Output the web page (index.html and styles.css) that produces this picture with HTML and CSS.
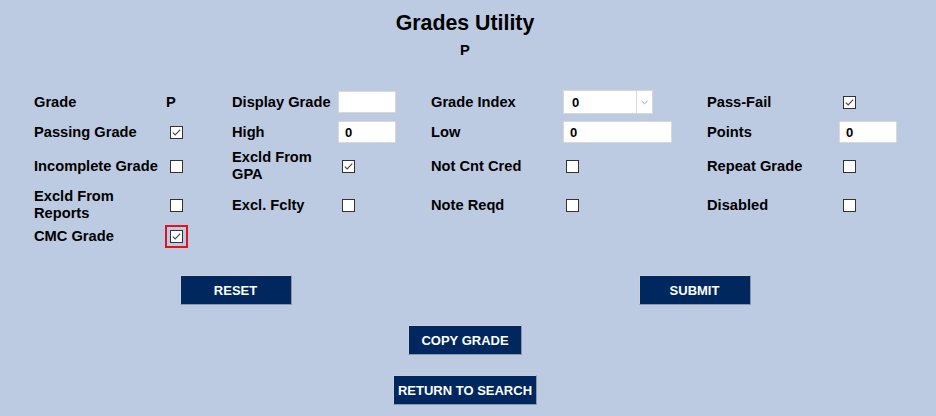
FILE: index.html
```html
<!DOCTYPE html>
<html>
<head>
<meta charset="utf-8">
<link rel="stylesheet" href="styles.css">
</head>
<body>
<div class="page">
  <h1 class="title">Grades Utility</h1>
  <div class="subtitle">P</div>

  <div class="form-grid">
    <!-- row 1 -->
    <div class="lbl">Grade</div>
    <div class="val"><span class="static">P</span></div>
    <div class="lbl">Display Grade</div>
    <div class="val"><input class="txt txt-sm" type="text" value=""></div>
    <div class="lbl">Grade Index</div>
    <div class="val">
      <div class="sel"><span class="sel-text">0</span><span class="sel-btn"><svg width="7" height="5" viewBox="0 0 7 5"><path d="M0.5 1 L3.5 3.8 L6.5 1" fill="none" stroke="#a0a0a0" stroke-width="1"/></svg></span></div>
    </div>
    <div class="lbl">Pass-Fail</div>
    <div class="val"><span class="cb checked"><svg width="13" height="13" viewBox="0 0 13 13"><path d="M2.8 6.6 L5.2 8.9 L10.2 3.6" fill="none" stroke="#4a4a4a" stroke-width="1.2"/></svg></span></div>

    <!-- row 2 -->
    <div class="lbl">Passing Grade</div>
    <div class="val"><span class="cb checked"><svg width="13" height="13" viewBox="0 0 13 13"><path d="M2.8 6.6 L5.2 8.9 L10.2 3.6" fill="none" stroke="#4a4a4a" stroke-width="1.2"/></svg></span></div>
    <div class="lbl">High</div>
    <div class="val"><input class="txt txt-sm" type="text" value="0"></div>
    <div class="lbl">Low</div>
    <div class="val"><input class="txt txt-lg" type="text" value="0"></div>
    <div class="lbl">Points</div>
    <div class="val"><input class="txt txt-sm" type="text" value="0"></div>

    <!-- row 3 -->
    <div class="lbl">Incomplete Grade</div>
    <div class="val"><span class="cb"></span></div>
    <div class="lbl">Excld From<br>GPA</div>
    <div class="val"><span class="cb checked"><svg width="13" height="13" viewBox="0 0 13 13"><path d="M2.8 6.6 L5.2 8.9 L10.2 3.6" fill="none" stroke="#4a4a4a" stroke-width="1.2"/></svg></span></div>
    <div class="lbl">Not Cnt Cred</div>
    <div class="val"><span class="cb cb-c3"></span></div>
    <div class="lbl">Repeat Grade</div>
    <div class="val"><span class="cb"></span></div>

    <!-- row 4 -->
    <div class="lbl">Excld From<br>Reports</div>
    <div class="val"><span class="cb"></span></div>
    <div class="lbl">Excl. Fclty</div>
    <div class="val"><span class="cb"></span></div>
    <div class="lbl">Note Reqd</div>
    <div class="val"><span class="cb cb-c3"></span></div>
    <div class="lbl">Disabled</div>
    <div class="val"><span class="cb"></span></div>

    <!-- row 5 -->
    <div class="lbl">CMC Grade</div>
    <div class="val"><span class="cb checked focus"><svg width="13" height="13" viewBox="0 0 13 13"><path d="M2.8 6.6 L5.2 8.9 L10.2 3.6" fill="none" stroke="#4a4a4a" stroke-width="1.2"/></svg></span></div>
  </div>

  <div class="actions">
    <div class="half"><button class="btn btn-fixed">RESET</button></div>
    <div class="half"><button class="btn btn-fixed">SUBMIT</button></div>
  </div>
  <div class="center-row"><button class="btn btn-copy">COPY GRADE</button></div>
  <div class="center-row"><button class="btn btn-return">RETURN TO SEARCH</button></div>
</div>
</body>
</html>
```

FILE: styles.css
```css
html, body {
  margin: 0;
  padding: 0;
  background: #bccbe2;
}
body {
  font-family: "Liberation Sans", Arial, sans-serif;
  color: #000;
  width: 936px;
  height: 416px;
  overflow: hidden;
}
.page {
  padding: 0 12px 0 6px;
}
.title {
  margin: 0;
  padding-top: 11px;
  font-size: 21.33px;
  line-height: 24px;
  font-weight: bold;
  text-align: center;
}
.subtitle {
  margin-top: 7px;
  font-size: 14.67px;
  line-height: 17px;
  font-weight: bold;
  text-align: center;
}
.form-grid {
  margin: 28px 0 0 28px;
  display: grid;
  grid-template-columns: 132px 66px 106px 93px 132px 144px 132px 80px;
  grid-template-rows: 30px 30px 38px 40px 22px;
  align-items: center;
}
.lbl {
  font-size: 14.67px;
  font-weight: bold;
  line-height: 17px;
}
.val {
  display: flex;
  align-items: center;
  font-size: 14.67px;
  font-weight: bold;
}
.static {
  line-height: 17px;
}
.txt {
  box-sizing: border-box;
  height: 22px;
  margin: 0;
  padding: 0 6px;
  border: 1px solid #d8d8d8;
  background: #fff;
  font-family: "Liberation Sans", Arial, sans-serif;
  font-size: 13px;
  font-weight: bold;
  color: #000;
  outline: none;
}
.txt-sm { width: 58px; }
.txt-lg { width: 109px; }
.sel {
  box-sizing: border-box;
  width: 90px;
  height: 24px;
  background: #fff;
  border: 1px solid #d8d8d8;
  display: flex;
  align-items: center;
}
.sel-text {
  flex: 1;
  padding-left: 8px;
  font-size: 13px;
  font-weight: bold;
}
.sel-btn {
  width: 15px;
  height: 22px;
  border-left: 1px solid #d8d8d8;
  display: flex;
  align-items: center;
  justify-content: center;
}
.cb {
  box-sizing: border-box;
  display: inline-block;
  width: 13px;
  height: 13px;
  margin-left: 4px;
  border: 1px solid #333;
  background: #fff;
  position: relative;
}
.cb svg {
  position: absolute;
  left: -1px;
  top: -1px;
}
.cb-c3 { margin-left: 3px; }
.cb.focus {
  outline: 2px solid #e2131b;
  outline-offset: 3px;
}
.actions {
  margin-top: 28px;
  display: flex;
}
.half {
  flex: 1;
  display: flex;
  justify-content: center;
}
.center-row {
  margin-top: 20px;
  display: flex;
  justify-content: center;
}
.btn {
  box-sizing: border-box;
  height: 30px;
  margin: 0;
  padding: 0 5px;
  background: #00285f;
  color: #fff;
  border: 1px solid #c9cfd8;
  border-right-color: #8e96a3;
  border-bottom-color: #8e96a3;
  font-family: "Liberation Sans", Arial, sans-serif;
  font-size: 13px;
  font-weight: bold;
  cursor: pointer;
}
.btn-fixed { width: 112px; }
.btn-copy { width: 114px; }
.btn-return { padding: 0 4px; }
```
